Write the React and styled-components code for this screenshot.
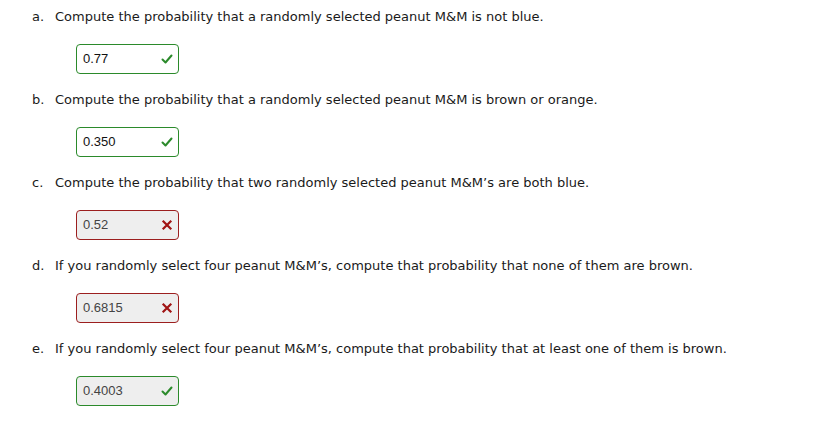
import styled, { createGlobalStyle } from 'styled-components';

const GlobalStyle = createGlobalStyle`
    body {
        margin: 0;
        background: #ffffff;
    }
`;

const Page = styled.div`
    padding: 7px 0 0 32px;
    font-family: "DejaVu Sans", Tahoma, sans-serif;
    font-size: 13px;
    color: #1a1a1a;
`;

const Question = styled.div`
    margin-bottom: ${props => props.$last ? 0 : '16.5px'};
`;

const Prompt = styled.div`
    display: flex;
    height: 20px;
    line-height: 20px;
    white-space: nowrap;
`;

const Letter = styled.span`
    flex: 0 0 23px;
`;

const AnswerBox = styled.div`
    display: flex;
    align-items: center;
    justify-content: space-between;
    box-sizing: border-box;
    width: 103px;
    height: 30px;
    margin: 16.5px 0 0 44px;
    padding: 0 5px 0 6px;
    border: 1px solid ${props => props.$correct ? '#2b8a2b' : '#9c1f1f'};
    border-radius: 4px;
    background: ${props => props.$dim ? '#eeeeee' : '#ffffff'};
    font-family: "Liberation Sans", Arial, sans-serif;
    font-size: 13px;
    color: ${props => props.$dim ? '#444444' : '#111111'};
`;

const Mark = styled.svg`
    width: 12px;
    height: 12px;
`;

function Check() {
    return (
        <Mark viewBox="0 0 12 12">
            <path d="M1.5 6.5 L4.5 9.5 L10.5 2.5" fill="none" stroke="#2b8a2b" strokeWidth="2" strokeLinecap="round" strokeLinejoin="round" />
        </Mark>
    );
}

function Cross() {
    return (
        <Mark viewBox="0 0 12 12">
            <path d="M2.5 2.5 L9.5 9.5 M9.5 2.5 L2.5 9.5" fill="none" stroke="#a01414" strokeWidth="2.2" strokeLinecap="square" />
        </Mark>
    );
}

const questions = [
    { letter: 'a.', text: 'Compute the probability that a randomly selected peanut M&M is not blue.', value: '0.77', correct: true },
    { letter: 'b.', text: 'Compute the probability that a randomly selected peanut M&M is brown or orange.', value: '0.350', correct: true },
    { letter: 'c.', text: 'Compute the probability that two randomly selected peanut M&M\u2019s are both blue.', value: '0.52', correct: false },
    { letter: 'd.', text: 'If you randomly select four peanut M&M\u2019s, compute that probability that none of them are brown.', value: '0.6815', correct: false },
    { letter: 'e.', text: 'If you randomly select four peanut M&M\u2019s, compute that probability that at least one of them is brown.', value: '0.4003', correct: true, dim: true },
];

export default function App() {
    return (
        <>
            <GlobalStyle />
            <Page>
                {questions.map((q, i) => (
                    <Question key={q.letter} $last={i === questions.length - 1}>
                        <Prompt>
                            <Letter>{q.letter}</Letter>
                            <span>{q.text}</span>
                        </Prompt>
                        <AnswerBox $correct={q.correct} $dim={q.dim || !q.correct}>
                            <span>{q.value}</span>
                            {q.correct ? <Check /> : <Cross />}
                        </AnswerBox>
                    </Question>
                ))}
            </Page>
        </>
    );
}
